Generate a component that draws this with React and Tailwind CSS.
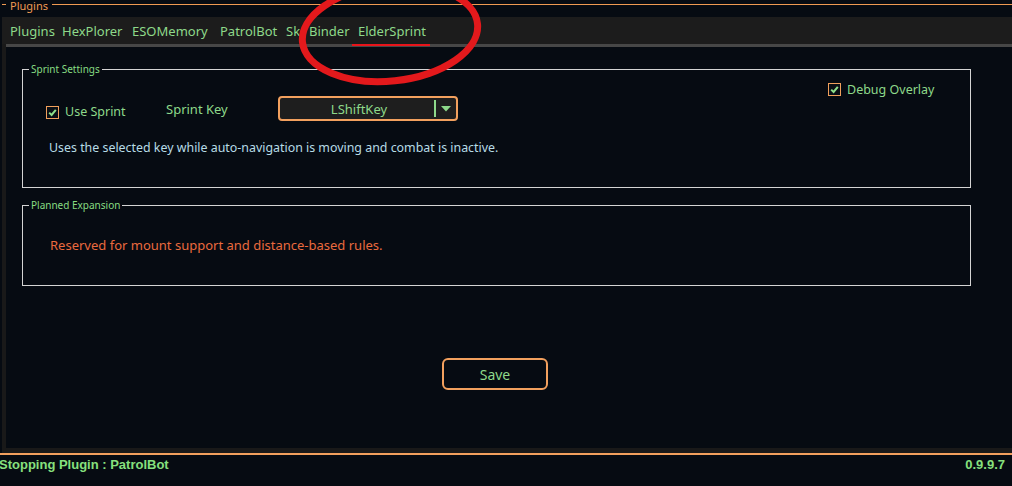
import React from "react";

const font = { fontFamily: '"Noto Sans", "Open Sans", sans-serif' };

const CheckBox = () => (
  <span className="flex h-[13px] w-[13px] shrink-0 items-center justify-center border border-[#f0a05c] bg-[#0a0f15]">
    <svg width="9" height="9" viewBox="0 0 9 9">
      <path d="M1.2 4.6 L3.6 7 L7.8 1.8" fill="none" stroke="#8ee08a" strokeWidth="2" />
    </svg>
  </span>
);

const GroupBox = ({ title, className, children }) => (
  <fieldset className={`ml-[16px] w-[949px] border border-[#d4d4d4] ${className}`}>
    <legend className="ml-[6px] px-[2px] text-[10px] leading-[14px] text-[#86dc82]">
      {title}
    </legend>
    {children}
  </fieldset>
);

const tabs = [
  { label: "Plugins", w: "w-[52px]" },
  { label: "HexPlorer", w: "w-[70px]" },
  { label: "ESOMemory", w: "w-[88px]" },
  { label: "PatrolBot", w: "w-[66px]" },
  { label: "Sk", w: "w-[23px]" },
  { label: "Binder", w: "w-[49px]" },
  { label: "ElderSprint", w: "w-[70px]" },
];

export default function App() {
  return (
    <div
      className="relative flex h-[486px] w-[1012px] flex-col overflow-hidden bg-[#060b12]"
      style={font}
    >
      {/* outer group title */}
      <div className="flex h-[17px] shrink-0">
        <div className="ml-[2px] mt-[4px] h-px w-[4px] bg-[#f09a52]" />
        <span className="mx-[4px] text-[11px] leading-[11px] text-[#f09a52]">Plugins</span>
        <div className="mt-[4px] h-px flex-1 bg-[#f09a52]" />
      </div>

      {/* tab strip */}
      <div className="ml-[2px] flex h-[27px] shrink-0 bg-[#1c1c1c] pl-[8px] pt-[5px]">
        {tabs.map((t) => (
          <span
            key={t.label}
            className={`${t.w} shrink-0 overflow-hidden whitespace-nowrap text-[13px] leading-[18px] text-[#8ed98a]`}
          >
            {t.label}
          </span>
        ))}
      </div>

      {/* body frame */}
      <div className="ml-[2px] flex flex-1 flex-col border-b-[5px] border-l-[4px] border-[#191919]">
        <div className="flex h-[3px] shrink-0 bg-[#474747]">
          <div className="ml-[346px] h-[2px] w-[78px] bg-[#e8141a]" />
        </div>

        <div className="flex flex-col pt-[15px]">
          <GroupBox title="Sprint Settings" className="h-[126px]">
            <div className="mt-[7px] flex h-[13px] items-center pl-[805px]">
              <CheckBox />
              <span className="ml-[6px] whitespace-nowrap text-[12.5px] leading-[16px] text-[#8ed98a]">
                Debug Overlay
              </span>
            </div>

            <div className="flex h-[25px] items-start pl-[23px]">
              <div className="mt-[8px] flex w-[120px] items-center">
                <CheckBox />
                <span className="ml-[6px] whitespace-nowrap text-[12.5px] leading-[16px] text-[#8ed98a]">
                  Use Sprint
                </span>
              </div>
              <span className="mt-[5px] w-[112px] whitespace-nowrap text-[13px] leading-[16px] text-[#8ed98a]">
                Sprint Key
              </span>
              <div className="flex h-[25px] w-[180px] items-center rounded-[4px] border-2 border-[#f2a05e] bg-[#1e1e1e]">
                <span className="flex-1 pl-[4px] text-center text-[13px] leading-[16px] text-[#8ed98a]">
                  LShiftKey
                </span>
                <div className="h-[17px] w-[2px] bg-[#8ed98a]" />
                <svg className="mx-[5px]" width="10" height="6" viewBox="0 0 10 6">
                  <path d="M0 0 H10 L5 5.5 Z" fill="#8ed98a" />
                </svg>
              </div>
            </div>

            <p className="mt-[19px] whitespace-nowrap pl-[26px] text-[12.4px] leading-[16px] text-[#b7dce6]">
              Uses the selected key while auto-navigation is moving and combat is inactive.
            </p>
          </GroupBox>

          <GroupBox title="Planned Expansion" className="mt-[10px] h-[88px]">
            <p className="mt-[24px] whitespace-nowrap pl-[27px] text-[13px] leading-[18px] text-[#ea6a3e]">
              Reserved for mount support and distance-based rules.
            </p>
          </GroupBox>

          <div className="ml-[16px] mt-[72px] flex w-[946px] justify-center">
            <button className="flex h-[32px] w-[106px] items-center justify-center rounded-[6px] border-2 border-[#f2a05e] bg-[#060b12] text-[14px] text-[#8ed98a]">
              Save
            </button>
          </div>
        </div>
      </div>

      {/* status bar */}
      <div className="h-[2px] shrink-0 bg-[#f2a05e]" />
      <div
        className="flex h-[31px] shrink-0 items-start justify-between pr-[7px] pt-[2px] text-[13px] font-bold leading-[16px] text-[#86e07e]"
        style={{ fontFamily: '"Liberation Sans", Arial, sans-serif' }}
      >
        <span className="-ml-[1px] whitespace-nowrap">Stopping Plugin : PatrolBot</span>
        <span>0.9.9.7</span>
      </div>

      {/* red annotation ellipse drawn over the tabs */}
      <svg
        className="pointer-events-none absolute left-[290px] top-[-30px]"
        width="200"
        height="120"
        viewBox="0 0 200 120"
      >
        <ellipse
          cx="100"
          cy="63"
          rx="88"
          ry="48"
          fill="none"
          stroke="#e3191c"
          strokeWidth="7"
          transform="rotate(-6 100 63)"
        />
      </svg>
    </div>
  );
}
